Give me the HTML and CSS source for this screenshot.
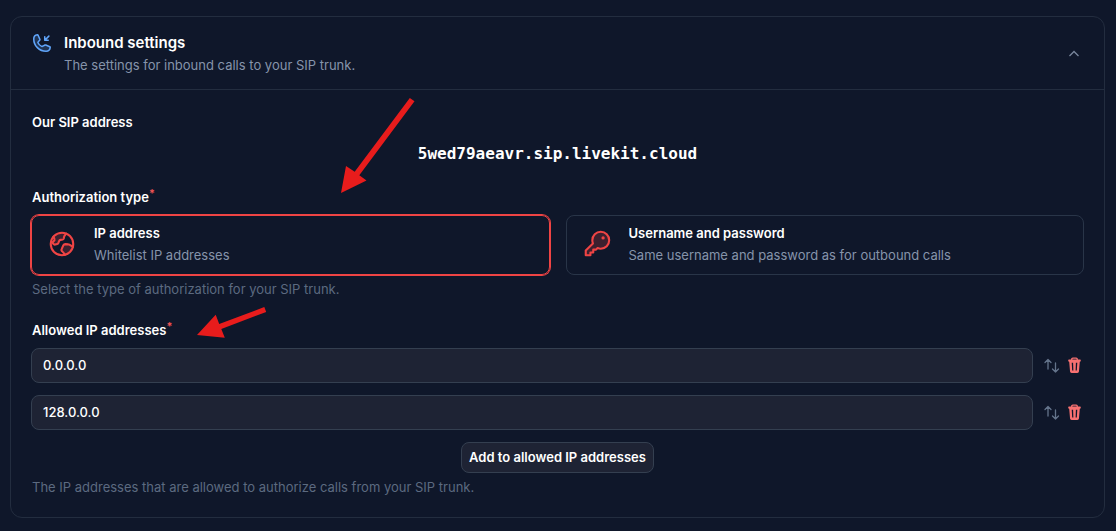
FILE: index.html
```html
<!DOCTYPE html>
<html lang="en">
<head>
<meta charset="utf-8">
<title>Inbound settings</title>
<link rel="stylesheet" href="styles.css">
</head>
<body>
<main class="card">
  <header class="card-header">
    <svg class="header-icon" viewBox="0 0 256 256" aria-hidden="true">
      <path class="tint" d="M223.900 181a48 48 0 0 1-47.900 43A144 144 0 0 1 32 80a48 48 0 0 1 42-47.600 8 8 0 0 1 8.300 4.800l21.100 47.100a8 8 0 0 1-.6 7.500l-21.400 26a8 8 0 0 0-.5 7.700c8.300 17 25.800 34.200 42.700 42.300a8 8 0 0 0 7.800-.6l25-21.300a8 8 0 0 1 7.600-.7l47.200 21.100a8 8 0 0 1 4.800 8.400Z"/>
      <path class="line" d="M132 167.200l32-15.400a8 8 0 0 1 7.600-.7l47.100 21.100a8 8 0 0 1 4.800 8.300A48 48 0 0 1 176 224 144 144 0 0 1 32 80a48 48 0 0 1 42-47.600 8 8 0 0 1 8.300 4.800l21.100 47.100a8 8 0 0 1-.6 7.500l-21.400 26a8 8 0 0 0-.5 7.700c8.300 17 25.800 34.200 42.700 42.300a8 8 0 0 0 7.800-.6M200 96h-40V56 M208 48l-48 48"/>
    </svg>
    <div class="header-text">
      <h1 class="title">Inbound settings</h1>
      <p class="subtitle">The settings for inbound calls to your SIP trunk.</p>
    </div>
    <button class="collapse" type="button" aria-label="Collapse" aria-expanded="true">
      <svg class="chevron" viewBox="0 0 12 12" aria-hidden="true"><path d="M1.500 8L6 3.500 10.500 8"/></svg>
    </button>
  </header>

  <form class="card-body">
    <section class="group">
      <h2 class="label">Our SIP address</h2>
      <p class="sip-address">5wed79aeavr.sip.livekit.cloud</p>
    </section>

    <section class="group" role="radiogroup" aria-labelledby="auth-label">
      <h2 class="label" id="auth-label">Authorization type<sup class="required">*</sup></h2>
      <div class="options">
        <label class="option selected">
          <input class="option-radio" type="radio" name="auth" value="ip" checked>
          <svg class="option-icon" viewBox="0 0 256 256" aria-hidden="true">
            <path class="tint" d="M75 48L54 104 50 118 68 130 88 122 104 96 133 84 142 62 158 38A96 96 0 0 0 75 48Z M145 131L187 133 222 152A96 96 0 0 1 152 221L149 203 128 180 128 165Z"/>
            <circle class="line" cx="128" cy="128" r="96"/>
            <path class="line" d="M54 66c8 10 12 20 10 30L50 110c-3 5-2 10 1 13l8 7c3 3 7 4 11 3l18-6c4-1 7-4 9-8l7-17c2-5 6-8 11-9l19-4c4-1 8-4 9-8l3-16c1-3 3-6 5-9l13-16"/>
            <path class="line" d="M222 152l-31-18c-3-2-6-3-9-3l-26-2c-7 0-13 3-16 9l-15 34c-3 6-1 13 3 17l18 19c4 4 5 9 4 13"/>
          </svg>
          <span class="option-text">
            <span class="option-title">IP address</span>
            <span class="option-desc">Whitelist IP addresses</span>
          </span>
        </label>
        <label class="option">
          <input class="option-radio" type="radio" name="auth" value="password">
          <svg class="option-icon" viewBox="0 0 256 256" aria-hidden="true">
            <path class="tint line" d="M93.200 122.800A70.300 70.300 0 0 1 88 96a72 72 0 1 1 72 72 70.300 70.300 0 0 1-26.800-5.200L120 176H96v24H72v24H32v-40Z"/>
            <circle class="dot" cx="180" cy="76" r="14"/>
          </svg>
          <span class="option-text">
            <span class="option-title">Username and password</span>
            <span class="option-desc">Same username and password as for outbound calls</span>
          </span>
        </label>
      </div>
      <p class="help">Select the type of authorization for your SIP trunk.</p>
    </section>

    <section class="group">
      <h2 class="label">Allowed IP addresses<sup class="required">*</sup></h2>
      <div class="rows">
        <div class="row">
          <input class="field" type="text" value="0.0.0.0" aria-label="Allowed IP address 1">
          <button class="icon-button" type="button" aria-label="Reorder">
            <svg class="swap" viewBox="0 0 16 16" aria-hidden="true"><path d="M4 11V1.500M1 4.500l3-3 3 3M11.500 5v9M8.500 11l3 3 3-3"/></svg>
          </button>
          <button class="icon-button" type="button" aria-label="Delete">
            <svg class="trash" viewBox="0 0 14 18" aria-hidden="true"><path class="trash-handle" d="M4 3.500V2.200Q4 1 5.200 1h3.600Q10 1 10 2.200v1.300"/><path class="trash-can" fill-rule="evenodd" d="M1 2.500h12q.8 0 .8 1.200t-.8 1.200h-.3l-.9 10.500q-.1 1.600-1.700 1.600H3.900q-1.600 0-1.700-1.600L1.300 4.900H1q-.8 0-.8-1.200T1 2.500ZM4 6l.5 8.500h1.300L5.500 6ZM8.500 6l-.3 8.500h1.300L10 6Z"/></svg>
          </button>
        </div>
        <div class="row">
          <input class="field" type="text" value="128.0.0.0" aria-label="Allowed IP address 2">
          <button class="icon-button" type="button" aria-label="Reorder">
            <svg class="swap" viewBox="0 0 16 16" aria-hidden="true"><path d="M4 11V1.500M1 4.500l3-3 3 3M11.500 5v9M8.500 11l3 3 3-3"/></svg>
          </button>
          <button class="icon-button" type="button" aria-label="Delete">
            <svg class="trash" viewBox="0 0 14 18" aria-hidden="true"><path class="trash-handle" d="M4 3.500V2.200Q4 1 5.200 1h3.600Q10 1 10 2.200v1.300"/><path class="trash-can" fill-rule="evenodd" d="M1 2.500h12q.8 0 .8 1.200t-.8 1.200h-.3l-.9 10.500q-.1 1.600-1.700 1.600H3.900q-1.600 0-1.700-1.600L1.300 4.900H1q-.8 0-.8-1.200T1 2.500ZM4 6l.5 8.500h1.300L5.500 6ZM8.500 6l-.3 8.500h1.300L10 6Z"/></svg>
          </button>
        </div>
        <button class="add" type="button">Add to allowed IP addresses</button>
      </div>
      <p class="help">The IP addresses that are allowed to authorize calls from your SIP trunk.</p>
    </section>
  </form>
</main>

<!-- Annotation arrows over the form -->
<svg class="arrow arrow-auth" viewBox="0 0 74 98" aria-hidden="true">
  <path d="M68.800 1l4.700 3.300L18.300 78.300 25.500 83.500 0 96 5 69l8.700 5.700Z"/>
</svg>
<svg class="arrow arrow-ips" viewBox="0 0 70 32" aria-hidden="true">
  <path d="M67.300 0l1.900 4.900L24.300 22l3.500 8.800L0 28 18.700 7.700 22.200 17Z"/>
</svg>
</body>
</html>
```
FILE: styles.css
```css
* { box-sizing: border-box; }

body {
  position: relative;
  margin: 0;
  padding: 16px 11px 12px 10px;
  background: #0f172a;
  color: #fff;
  font-family: Inter, "Liberation Sans", sans-serif;
  font-size: 13px;
  line-height: 20px;
}

h1, h2, p { margin: 0; }

button {
  font: inherit;
  color: inherit;
  cursor: pointer;
}

.card {
  border: 1px solid #232d3f;
  border-radius: 12px;
}

.card-header {
  display: flex;
  align-items: center;
  gap: 11px;
  padding: 14px 20px 13px;
  border-bottom: 1px solid #232d3f;
}

.header-icon {
  align-self: flex-start;
  width: 22px;
  height: 22px;
  margin-top: 1px;
  color: #60a5fa;
}

.header-text { flex: 1; }

.title {
  font-size: 15px;
  line-height: 24px;
  font-weight: 600;
}

.subtitle { line-height: 21px; color: #8694aa; }

.tint { fill: currentColor; fill-opacity: 0.2; }

.line {
  stroke: currentColor;
  stroke-width: 18;
  stroke-linecap: round;
  stroke-linejoin: round;
}

.line:not(.tint) { fill: none; }

.dot { fill: currentColor; }

.collapse {
  display: flex;
  padding: 4px;
  border: 0;
  background: none;
}

.chevron {
  width: 12px;
  height: 12px;
  fill: none;
  stroke: #78869c;
  stroke-width: 1.3;
}

.card-body {
  display: flex;
  flex-direction: column;
  gap: 21px;
  padding: 22px 20px 20px;
}

.label {
  padding-left: 1px;
  margin-bottom: 8px;
  font-size: 13px;
  line-height: 20px;
  font-weight: 600;
}

.required {
  color: #f25555;
  font-size: 11px;
  line-height: 0;
}

.sip-address {
  padding-top: 2px;
  font-family: "DejaVu Sans Mono", monospace;
  font-size: 16px;
  line-height: 24px;
  font-weight: 700;
  text-align: center;
}

.options {
  display: grid;
  grid-template-columns: 1fr 1fr;
  gap: 16px;
}

.option {
  display: flex;
  align-items: center;
  gap: 17px;
  padding: 6px 15px 8px;
  border: 1px solid #293548;
  border-radius: 8px;
}

.option.selected {
  border-color: #ef4444;
  box-shadow: 0 0 0 1px #ef4444;
}

.option-radio {
  position: absolute;
  opacity: 0;
}

.option-icon {
  width: 30px;
  height: 30px;
  color: #ef4444;
}

.option-text { display: flex; flex-direction: column; }

.option-title { line-height: 22px; font-weight: 600; }

.option-desc { line-height: 22px; color: #8694aa; }

.help {
  padding-left: 1px;
  margin-top: 4px;
  color: #5c6a80;
}

.rows {
  display: flex;
  flex-direction: column;
  gap: 12px;
}

.row {
  display: flex;
  align-items: center;
  gap: 8px;
}

.field {
  flex: 1;
  min-width: 0;
  height: 35px;
  margin-right: 3px;
  padding: 0 11px 2px;
  border: 1px solid #343f50;
  border-radius: 8px;
  background: #1e2334;
  color: #fff;
  font: inherit;
  font-weight: 500;
}

.icon-button {
  display: flex;
  padding: 0;
  border: 0;
  background: none;
}

.row .icon-button:last-child { margin-right: 3px; }

.swap {
  width: 16px;
  height: 16px;
  fill: none;
  stroke: #64748b;
  stroke-width: 1.3;
  stroke-linecap: round;
  stroke-linejoin: round;
}

.trash { width: 13px; height: 17px; }

.trash-can { fill: #f87171; }

.trash-handle { fill: none; stroke: #f87171; stroke-width: 1.4; }

.add {
  align-self: center;
  padding: 4px 7px 5px;
  border: 1px solid #343f50;
  border-radius: 8px;
  background: #1e2334;
  font-weight: 600;
}

.arrow {
  position: absolute;
  fill: #e81c1c;
  pointer-events: none;
}

.arrow-auth {
  left: 341px;
  top: 97px;
  width: 74px;
  height: 98px;
}

.arrow-ips {
  left: 197px;
  top: 307px;
  width: 70px;
  height: 32px;
}
```
